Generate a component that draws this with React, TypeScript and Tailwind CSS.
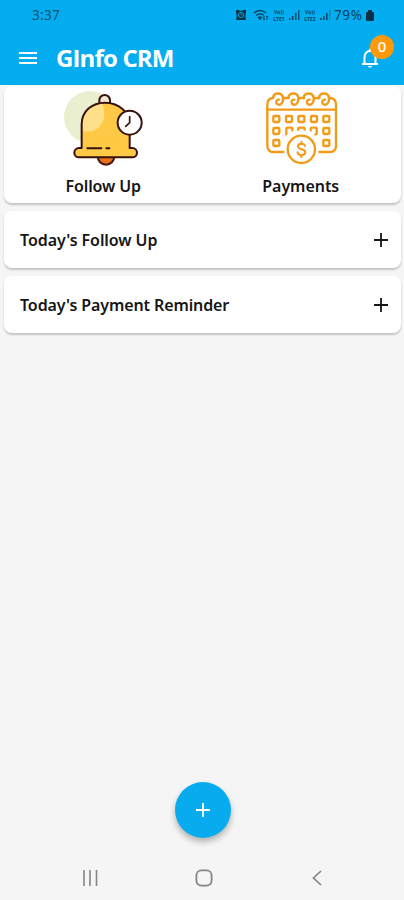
import type { ReactNode } from "react";

const menuCards = [
  { label: "Follow Up", icon: <FollowUpIcon />, text: "tracking-[-0.1px]" },
  { label: "Payments", icon: <PaymentsIcon />, text: "tracking-[-0.05px] -ml-[2px]" },
];

const sections = [
  { title: "Today's Follow Up", text: "tracking-[-0.08px]" },
  { title: "Today's Payment Reminder", text: "tracking-[-0.11px]" },
];

function FollowUpIcon() {
  return (
    <svg viewBox="40 10 240 240" className="h-20 w-20" fill="none" strokeLinecap="round" strokeLinejoin="round">
      <circle cx="121" cy="97" r="78" fill="#e9efcf" />
      <path d="M144 215a25 25 0 0 0 50 0Z" fill="#e9711c" stroke="#4a1713" strokeWidth="6" />
      <path d="M149 56V47a16 16 0 0 1 32 0v9" fill="#f3e6d2" stroke="#35120f" strokeWidth="6" />
      <path
        d="M96 190V119C96 79 127 54 166 54s74 27 74 65v71h8a14 14 0 0 1 0 28H88a14 14 0 0 1 0-28Z"
        fill="#ffc845"
      />
      <path d="M99 140v-22c0-35 25-58 59-61 9 23 9 48-7 67-13 16-32 19-52 16Z" fill="#ffe08a" />
      <path
        d="M96 190V119C96 79 127 54 166 54s74 27 74 65v71h8a14 14 0 0 1 0 28H88a14 14 0 0 1 0-28Z"
        stroke="#35120f"
        strokeWidth="6"
      />
      <path d="M113 191h42M170 191h9" stroke="#35120f" strokeWidth="6" />
      <circle cx="240" cy="114" r="36" fill="#fff" stroke="#35120f" strokeWidth="6" />
      <path d="M240 96v18l-12 11" stroke="#35120f" strokeWidth="5" />
    </svg>
  );
}

function PaymentsIcon() {
  const rings = [86, 132, 178, 224];
  const days = [
    [80, 103], [118, 103], [155, 103], [193, 103], [230, 103],
    [80, 139], [230, 139],
    [80, 175], [230, 175],
  ];

  return (
    <svg
      viewBox="40 10 240 240"
      className="ml-[3px] h-20 w-20"
      fill="none"
      stroke="#f39a16"
      strokeWidth="7"
      strokeLinecap="round"
      strokeLinejoin="round"
    >
      <path d="M101 202H70a17 17 0 0 1-17-17V60q0-18 16-20M242 40q17 2 17 20v125a17 17 0 0 1-17 17h-33" />
      <path d="M53 75h206M101 40h16M147 40h16M193 40h16" />
      {rings.map((x) => (
        <path
          key={x}
          d={`M${x - 16} 40C${x - 14} 22 ${x + 12} 22 ${x + 14} 40C${x + 16} 56 ${x + 3} 65 ${x - 5} 57C${x - 9} 51 ${x - 5} 44 ${x + 2} 45`}
        />
      ))}
      {days.map(([x, y]) => (
        <rect key={`${x}-${y}`} x={x - 9} y={y - 9} width="18" height="18" rx="3" />
      ))}
      <path d="M110 149v-16q0-4 4-4h10q4 0 4 4v4M145 135q0-6 5-6h10q5 0 5 6M183 137v-4q0-4 4-4h10q4 0 4 4v12q0 4-4 4" />
      <circle cx="155" cy="194" r="41" fill="#fff" />
      <path d="M166 184c-2-9-21-9-21 1 0 12 22 6 22 18 0 11-22 11-23 0M155 171v7M155 212v6" strokeWidth="6" />
    </svg>
  );
}

function Signal({ sim }: { sim: number }) {
  return (
    <div className="flex items-center gap-[2px]">
      <div className="flex w-[14px] flex-col items-center text-[5px] font-bold tracking-[0.1px]">
        <span className="block h-[7px] leading-[7px]">Vo))</span>
        <span className="block h-[6px] leading-[6px]">LTE{sim}</span>
      </div>
      <svg viewBox="0 0 12 12" className="h-3 w-3" fill="currentColor">
        <path d="M1 9h1.5v2H1zM4 7h1.5v4H4zM7 4h1.5v7H7z" />
        <path d="M10 1h1.5v10H10z" opacity={sim === 1 ? 0.8 : 0.35} />
      </svg>
    </div>
  );
}

function StatusBar() {
  return (
    <div className="flex h-[30px] items-center justify-between pr-[30px] pl-8 text-[#075170]">
      <span className="text-[13.5px] tracking-[0.3px]">3:37</span>
      <div className="flex items-center text-[#064461]">
        <svg viewBox="0 0 12 12" className="mr-[6px] h-3 w-3" fill="none">
          <path d="M1 1h3l.5.7h3L8 1h3v3l-.5.5V9l.5 2H1l.5-2V4.5L1 4Z" fill="#063247" />
          <circle cx="6" cy="6" r="2.6" stroke="#06a4e4" />
          <path d="M6 4.5V6h1.2" stroke="#06a4e4" strokeWidth=".8" />
        </svg>
        <svg viewBox="0 0 16 14" className="mr-[3px] h-[14px] w-4" fill="none" stroke="currentColor" strokeWidth="1.5">
          <path d="M1 5q6-5 12 0M3.2 7.3q3.8-3 7.6 0M5.5 9.6q1.5-1.3 3 0L7 11Z" />
          <path d="M11 8v4m-1-1 1 1 1-1M14 12V8m-1 1 1-1 1 1" strokeWidth="1" />
        </svg>
        <div className="flex gap-[3px]">
          <Signal sim={1} />
          <Signal sim={2} />
        </div>
        <span className="ml-[3px] w-[32px] text-[13.5px] tracking-[0.6px]">79%</span>
        <svg viewBox="0 0 8 12" className="h-3 w-2" fill="#063247">
          <path d="M2 1h4v2h1q1 0 1 1v7q0 1-1 1H1q-1 0-1-1V4q0-1 1-1h1Z" />
        </svg>
      </div>
    </div>
  );
}

function Header() {
  return (
    <header className="h-[85px] bg-[#04adef]">
      <StatusBar />
      <div className="flex h-[55px] items-center pr-[25px] pl-[19px] text-white">
        <svg viewBox="0 0 18 14" className="h-[14px] w-[18px]" stroke="currentColor" strokeWidth="1.8">
          <path d="M0 2h18M0 7h18M0 12h18" />
        </svg>
        <h1 className="ml-[19px] font-['Open_Sans'] text-[24px] leading-none font-bold tracking-[-0.85px] whitespace-nowrap">
          GInfo CRM
        </h1>
        <div className="relative ml-auto h-5 w-[18px]">
          <svg viewBox="0 0 18 20" className="h-5 w-[18px]" fill="none" stroke="currentColor" strokeWidth="2">
            <path d="M1 16h16M3.5 16V9a5.5 6 0 0 1 11 0v7M9 3V.8" />
            <path d="M7 18h4a2 1.5 0 0 1-4 0Z" fill="currentColor" stroke="none" />
          </svg>
          <span className="absolute -top-[13px] left-[9px] flex h-6 w-6 items-center justify-center rounded-full bg-[#ff9909] text-[15px] leading-none font-medium">
            0
          </span>
        </div>
      </div>
    </header>
  );
}

function Card({ className, children }: { className: string; children: ReactNode }) {
  return (
    <div className={`flex rounded-[8px] bg-white shadow-[0_2px_2px_rgba(0,0,0,0.2)] ${className}`}>{children}</div>
  );
}

function PlusIcon({ className }: { className: string }) {
  return (
    <svg viewBox="0 0 14 14" className={className} stroke="currentColor" strokeWidth="1.8">
      <path d="M7 0v14M0 7h14" />
    </svg>
  );
}

export default function App() {
  return (
    <div className="flex h-[900px] w-[404px] flex-col overflow-hidden bg-[#f5f5f5] font-['Noto_Sans',sans-serif] text-[#161616]">
      <Header />
      <main className="flex flex-1 flex-col gap-2 pt-px pr-[3px] pl-1">
        <Card className="h-[117px]">
          {menuCards.map((item) => (
            <div key={item.label} className="flex flex-1 flex-col items-center pt-[2px]">
              {item.icon}
              <span className={`mt-[8px] text-[16px] leading-5 font-semibold whitespace-nowrap ${item.text}`}>
                {item.label}
              </span>
            </div>
          ))}
        </Card>
        {sections.map((section) => (
          <Card key={section.title} className="h-[57px] items-center justify-between pr-[13px] pl-4">
            <span className={`text-[16px] leading-5 font-semibold whitespace-nowrap ${section.text}`}>
              {section.title}
            </span>
            <PlusIcon className="h-[14px] w-[14px]" />
          </Card>
        ))}
        <button
          aria-label="Add"
          className="mt-auto mb-[9px] flex h-14 w-14 shrink-0 items-center justify-center self-center rounded-full bg-[#08acee] text-white shadow-[0_4px_6px_rgba(0,0,0,0.28)]"
        >
          <PlusIcon className="h-[14px] w-[14px]" />
        </button>
      </main>
      <nav className="flex h-[53px] items-center justify-between pt-2 pr-[79px] pl-[82px] text-[#858585]">
        <svg viewBox="0 0 16 16" className="h-4 w-4" stroke="currentColor" strokeWidth="1.6">
          <path d="M2 0v16M8 0v16M14.5 0v16" />
        </svg>
        <svg viewBox="0 0 18 18" className="h-[18px] w-[18px]" fill="none" stroke="currentColor" strokeWidth="1.8">
          <rect x="1.4" y="1.4" width="15.2" height="15.2" rx="5" />
        </svg>
        <svg viewBox="0 0 16 16" className="h-4 w-4" fill="none" stroke="currentColor" strokeWidth="1.7">
          <path d="m12 1-7.5 7L12 15" />
        </svg>
      </nav>
    </div>
  );
}
